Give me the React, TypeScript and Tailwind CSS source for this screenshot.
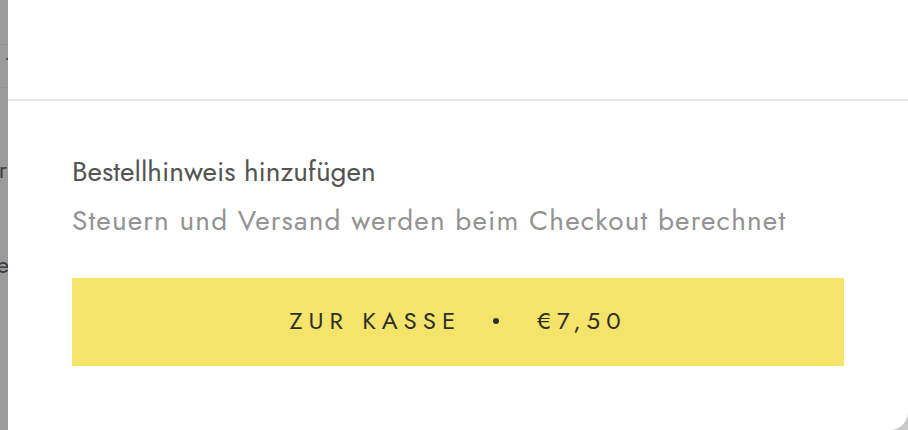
export default function App() {
  return (
    <div
      className="flex h-[430px] w-[908px] overflow-hidden bg-[#c9c9c9]"
      style={{ fontFamily: "Jost, Lato, 'Open Sans', sans-serif" }}
    >
      {/* dimmed page behind the drawer */}
      <div className="relative w-[8px] shrink-0 overflow-hidden bg-[#9b9b9b]">
        <div className="absolute left-0 top-[44px] h-[1px] w-[8px] bg-[#929292]" />
        <div className="absolute left-[6px] top-[58px] h-[2px] w-[2px] bg-[#555]" />
        <div className="absolute left-0 top-[87px] h-[1px] w-[8px] bg-[#929292]" />
        <span className="absolute right-[1px] top-[155px] text-[24px] leading-[30px] text-[#3d3d3d]">
          r
        </span>
        <span className="absolute right-[-1px] top-[250px] text-[24px] leading-[30px] text-[#3d3d3d]">
          e
        </span>
      </div>

      <div className="flex flex-1 flex-col rounded-br-[18px] bg-white">
        <div className="h-[101px] shrink-0 border-b-2 border-[#e8e8e8]" />
        <div className="flex flex-col px-[64px] pt-[55px]">
          <button className="h-[32px] self-start text-left text-[28px] leading-[32px] text-[#545454]">
            Bestellhinweis hinzufügen
          </button>
          <p className="mt-[17px] h-[32px] text-[28px] leading-[32px] tracking-[1.15px] text-[#939393]">
            Steuern und Versand werden beim Checkout berechnet
          </p>
          <button className="mt-[41px] flex h-[88px] w-[772px] items-center justify-center bg-[#f4e469] pb-[2px] text-[24px] tracking-[6px] text-[#2e2e2e]">
            <span>ZUR KASSE</span>
            <span className="ml-[32px] mr-[38px] h-[6px] w-[6px] rounded-full bg-[#2e2e2e]" />
            <span>€7,50</span>
          </button>
        </div>
      </div>
    </div>
  );
}
